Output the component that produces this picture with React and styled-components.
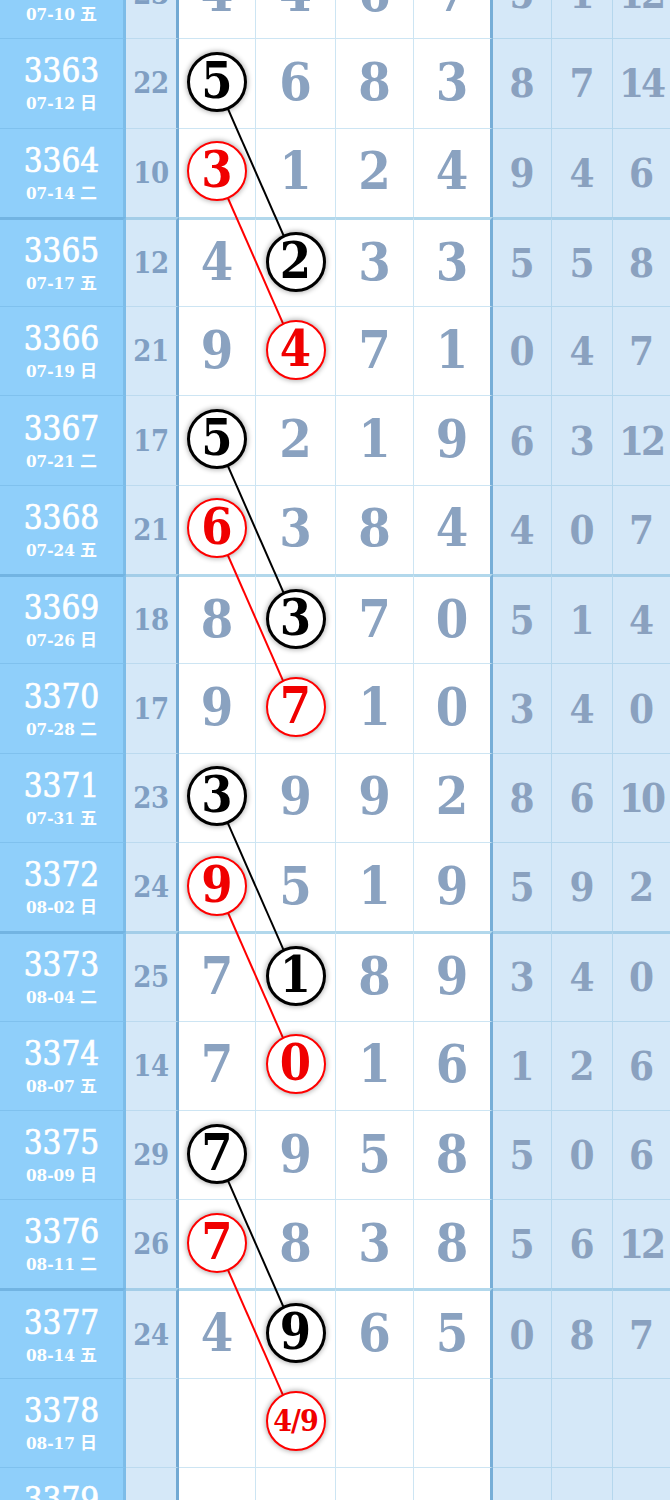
import React from "react";
import styled, { createGlobalStyle } from "styled-components";

const ROW_H = 89.31;
const COLS = [126, 53, 77, 80, 78, 79, 59, 61, 57];
const TOP_OFFSET = -51;
const SERIF = `"DejaVu Serif Condensed", "DejaVu Serif", "Liberation Serif", serif`;

const GlobalStyle = createGlobalStyle`
  html, body { margin: 0; padding: 0; background: #ffffff; overflow: hidden; }
  body { font-family: ${SERIF}; }
`;

const Board = styled.div`
  position: relative;
  width: 670px;
  margin-top: ${TOP_OFFSET}px;
`;

const Row = styled.div`
  display: grid;
  grid-template-columns: ${COLS.map((c) => c + "px").join(" ")};
  height: ${ROW_H}px;
`;

const BaseCell = styled.div`
  box-sizing: border-box;
  display: flex;
  align-items: center;
  justify-content: center;
  min-width: 0;
  font-family: ${SERIF};
  border-top-style: solid;
  border-top-width: ${(p) => (p.$thick ? "3px" : "1px")};
`;

const IssueCell = styled(BaseCell)`
  flex-direction: column;
  gap: 6px;
  background: #8fcffa;
  border-right: 3px solid #7dbce8;
  border-top-color: ${(p) => (p.$thick ? "#72b4e2" : "#7fc1ee")};
  color: #ffffff;
`;

const IssueNo = styled.div`
  font-size: 33px;
  line-height: 34px;
  font-weight: 400;
  -webkit-text-stroke: 0.7px #ffffff;
`;

const IssueDate = styled.div`
  font-family: "DejaVu Serif Condensed", "DejaVu Serif", "Noto Sans CJK SC", serif;
  font-size: 17px;
  line-height: 18px;
  font-weight: 700;
`;

const SumCell = styled(BaseCell)`
  background: #d5e8f8;
  border-right: 3px solid #72a9d3;
  border-top-color: ${(p) => (p.$thick ? "#a3cde8" : "#bcdaef")};
  color: #809fc3;
  font-size: 29px;
  font-weight: 700;
  letter-spacing: -0.5px;
`;

const MainCell = styled(BaseCell)`
  position: relative;
  background: #ffffff;
  border-right: ${(p) => (p.$last ? "3px solid #77aed7" : "1px solid #cde5f3")};
  border-top-color: ${(p) => (p.$thick ? "#b2d8ec" : "#cde5f3")};
  color: #8aa2c0;
  font-size: 52px;
  font-weight: 700;
  line-height: 1;
  padding-bottom: 3px;
`;

const ExtraCell = styled(BaseCell)`
  background: #d5e8f8;
  border-right: ${(p) => (p.$last ? "none" : "1px solid #b5d7ed")};
  border-top-color: ${(p) => (p.$thick ? "#a3cde8" : "#b5d7ed")};
  color: #8aa1bf;
  font-size: 40px;
  font-weight: 700;
  line-height: 1;
  letter-spacing: ${(p) => (p.$wide ? "-3px" : "0")};
  padding-right: ${(p) => (p.$wide ? "1px" : "0")};
`;

const Ring = styled.div`
  position: relative;
  z-index: 2;
  box-sizing: border-box;
  width: 60px;
  height: 60px;
  border-radius: 50%;
  background: #ffffff;
  border: ${(p) => (p.$red ? "2.5px solid #ff0000" : "3px solid #000000")};
  box-shadow: 0 0 5px 1px rgba(0, 0, 0, 0.3);
  display: flex;
  align-items: center;
  justify-content: center;
  color: ${(p) => (p.$red ? "#f00000" : "#000000")};
  font-size: ${(p) => (p.$small ? "30px" : "50px")};
  letter-spacing: ${(p) => (p.$small ? "-1px" : "0")};
  font-weight: 700;
  line-height: 1;
  padding-bottom: ${(p) => (p.$small ? "0" : "2px")};
`;

const Overlay = styled.svg`
  position: absolute;
  left: 0;
  top: 0;
  z-index: 1;
  pointer-events: none;
`;

const rows = [
  { no: 3362, date: "07-10 五", sum: 23, main: [4, 4, 6, 7], extra: [5, 1, 12] },
  { no: 3363, date: "07-12 日", sum: 22, main: [5, 6, 8, 3], extra: [8, 7, 14], mark: { col: 0, red: false } },
  { no: 3364, date: "07-14 二", sum: 10, main: [3, 1, 2, 4], extra: [9, 4, 6], mark: { col: 0, red: true } },
  { no: 3365, date: "07-17 五", sum: 12, main: [4, 2, 3, 3], extra: [5, 5, 8], mark: { col: 1, red: false } },
  { no: 3366, date: "07-19 日", sum: 21, main: [9, 4, 7, 1], extra: [0, 4, 7], mark: { col: 1, red: true } },
  { no: 3367, date: "07-21 二", sum: 17, main: [5, 2, 1, 9], extra: [6, 3, 12], mark: { col: 0, red: false } },
  { no: 3368, date: "07-24 五", sum: 21, main: [6, 3, 8, 4], extra: [4, 0, 7], mark: { col: 0, red: true } },
  { no: 3369, date: "07-26 日", sum: 18, main: [8, 3, 7, 0], extra: [5, 1, 4], mark: { col: 1, red: false } },
  { no: 3370, date: "07-28 二", sum: 17, main: [9, 7, 1, 0], extra: [3, 4, 0], mark: { col: 1, red: true } },
  { no: 3371, date: "07-31 五", sum: 23, main: [3, 9, 9, 2], extra: [8, 6, 10], mark: { col: 0, red: false } },
  { no: 3372, date: "08-02 日", sum: 24, main: [9, 5, 1, 9], extra: [5, 9, 2], mark: { col: 0, red: true } },
  { no: 3373, date: "08-04 二", sum: 25, main: [7, 1, 8, 9], extra: [3, 4, 0], mark: { col: 1, red: false } },
  { no: 3374, date: "08-07 五", sum: 14, main: [7, 0, 1, 6], extra: [1, 2, 6], mark: { col: 1, red: true } },
  { no: 3375, date: "08-09 日", sum: 29, main: [7, 9, 5, 8], extra: [5, 0, 6], mark: { col: 0, red: false } },
  { no: 3376, date: "08-11 二", sum: 26, main: [7, 8, 3, 8], extra: [5, 6, 12], mark: { col: 0, red: true } },
  { no: 3377, date: "08-14 五", sum: 24, main: [4, 9, 6, 5], extra: [0, 8, 7], mark: { col: 1, red: false } },
  { no: 3378, date: "08-17 日", sum: "", main: ["", "4/9", "", ""], extra: ["", "", ""], mark: { col: 1, red: true } },
  { no: 3379, date: "08-19 二", sum: "", main: ["", "", "", ""], extra: ["", "", ""] },
];

const colStart = (i) => COLS.slice(0, i).reduce((a, b) => a + b, 0);
const mainCenter = (c) => {
  const gi = 2 + c;
  const start = colStart(gi);
  const border = c === 3 ? 3 : 1;
  return start + (COLS[gi] - border) / 2;
};
const rowCenter = (r) => r * ROW_H + ROW_H / 2 + 1;

const segments = [];
rows.forEach((row, i) => {
  if (row.mark && row.mark.col === 0) {
    for (let j = i + 1; j < rows.length; j++) {
      const m = rows[j].mark;
      if (m && m.red === row.mark.red) {
        segments.push({
          x1: mainCenter(0),
          y1: rowCenter(i),
          x2: mainCenter(m.col),
          y2: rowCenter(j),
          red: row.mark.red,
        });
        break;
      }
    }
  }
});

export default function App() {
  const totalH = rows.length * ROW_H;
  return (
    <>
      <GlobalStyle />
      <Board>
        {rows.map((row) => {
          const thick = (row.no - 3361) % 4 === 0;
          return (
            <Row key={row.no}>
              <IssueCell $thick={thick}>
                <IssueNo>{row.no}</IssueNo>
                <IssueDate>{row.date}</IssueDate>
              </IssueCell>
              <SumCell $thick={thick}>{row.sum}</SumCell>
              {row.main.map((v, c) => (
                <MainCell key={c} $thick={thick} $last={c === 3}>
                  {row.mark && row.mark.col === c ? (
                    <Ring $red={row.mark.red} $small={String(v).length > 1}>
                      {v}
                    </Ring>
                  ) : (
                    v
                  )}
                </MainCell>
              ))}
              {row.extra.map((v, c) => (
                <ExtraCell key={c} $thick={thick} $last={c === 2} $wide={String(v).length > 1}>
                  {v}
                </ExtraCell>
              ))}
            </Row>
          );
        })}
        <Overlay width="670" height={totalH} viewBox={`0 0 670 ${totalH}`}>
          {segments.map((s, k) => (
            <line
              key={k}
              x1={s.x1}
              y1={s.y1}
              x2={s.x2}
              y2={s.y2}
              stroke={s.red ? "#ff0000" : "#000000"}
              strokeWidth="2"
            />
          ))}
        </Overlay>
      </Board>
    </>
  );
}
